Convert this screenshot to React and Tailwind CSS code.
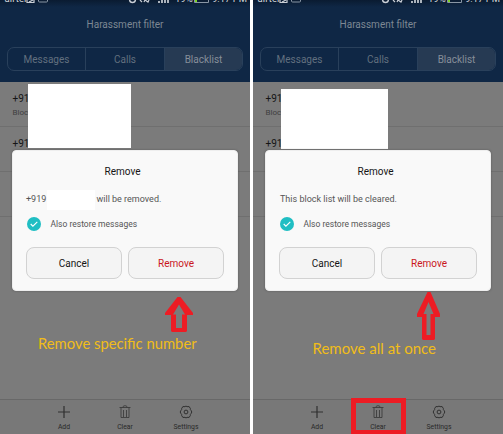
import React from "react";

function StatusBar() {
  return (
    <div className="relative h-[7px] shrink-0 bg-gradient-to-b from-[#0a1b31] to-[#0f2745] font-['Roboto',sans-serif] text-[9.5px] leading-[11px] text-[#d4d8dd]">
      <span className="absolute left-[4.5px] top-[-7px] tracking-[0.1px]">airtel</span>
      <svg className="absolute left-0 top-0" width="250" height="7" fill="none" stroke="#c9ced5">
        <path d="M27 0V2.5H34V0M29 2l4-2" strokeWidth="1.2" />
        <path d="M38.5 0v1q0 1 1 1h7q1 0 1-1V0" stroke="#8996a5" />
        <path d="M129.5 -1q0 3.5 3 3.5t3-3.5" strokeWidth="1.4" />
        <path d="M140 0l2 2M144 2l1-2 3 2 1-2" strokeWidth="1.2" />
        <path d="M159 1v2M162 0v3M165 0v3M168 0v3" strokeWidth="1.7" />
        <path d="M194.5 0v2.5h14V0" stroke="#8996a5" />
        <path d="M196 0v2" stroke="#7bd321" strokeWidth="2" />
      </svg>
      <span className="absolute left-[175px] top-[-7px]">19%</span>
      <span className="absolute left-[212px] top-[-7px] whitespace-nowrap">9:17 PM</span>
    </div>
  );
}

function Header() {
  return (
    <header className="flex h-[82px] shrink-0 flex-col bg-[#0f2745]">
      <StatusBar />
      <h1 className="mt-[9px] text-center text-[10px] leading-[17px] text-[#7d8793]">Harassment filter</h1>
      <div className="mx-[7px] mt-[14px] flex h-[24px] overflow-hidden rounded-[7px] border border-[#29405b] text-[10px] leading-[24px] text-[#62707f]">
        <span className="w-[78px] border-r border-[#29405b] text-center">Messages</span>
        <span className="w-[79px] border-r border-[#29405b] text-center">Calls</span>
        <span className="flex-1 bg-[#263a53] text-center text-[#868f9a]">Blacklist</span>
      </div>
    </header>
  );
}

function Contacts({ tall }) {
  return (
    <div className="relative shrink-0">
      <div className="h-[45px] border-b border-[#6f6f6f] pl-[12.5px] pt-[9px]">
        <div className="text-[10px] leading-[15px] text-[#151515]">+91</div>
        <div className="text-[8px] leading-[13px] text-[#3f3f3f]">Bloc</div>
      </div>
      <div className="h-[45px] border-b border-[#6f6f6f] pl-[12.5px] pt-[9px] text-[10px] leading-[15px] text-[#151515]">+91</div>
      <div className="h-[45px] border-b border-[#6f6f6f]" />
      <div className={tall ? "absolute left-[28px] top-[2px] h-[64px] w-[103px] bg-white" : "absolute left-[28px] top-[7px] h-[60px] w-[107px] bg-white"} />
    </div>
  );
}

function Dialog({ specific }) {
  return (
    <section className="absolute left-[12px] top-[150px] flex h-[141px] w-[226px] flex-col rounded-[4px] border border-[#eee] bg-[#f9f9f9] px-[13px] shadow-[0_0_2px_#555]">
      <h2 className="mt-[12px] pr-[5px] text-center text-[10px] leading-[17px] text-[#151515]">Remove</h2>
      <div className="mt-[10px] flex h-[20px] items-center whitespace-nowrap text-[9px] text-[#555]">
        {specific ? (
          <>
            <span className="w-[21px]">+919</span>
            <span className="h-[20px] w-[48px] bg-white" />
            <span className="ml-[1.5px]">will be removed.</span>
          </>
        ) : <span className="ml-[1px]">This block list will be cleared.</span>}
      </div>
      <div className="mt-[7px] flex h-[14px] items-center">
        <svg className="ml-[1px]" width="14" height="14" viewBox="0 0 14 14" fill="none">
          <circle cx="7" cy="7" r="7" fill="#20bec3" />
          <path d="m3.7 7 2.2 2.2 4.4-4.4" stroke="white" strokeWidth="1.1" />
        </svg>
        <span className="ml-[9.5px] text-[8.5px] leading-[14px] text-[#555]">Also restore messages</span>
      </div>
      <div className="mt-[16px] flex gap-[6px] text-[10px]">
        <button className="h-[32px] w-[96px] rounded-[8px] border border-[#d2d2d2] bg-[#f4f4f4] text-[#151515]">Cancel</button>
        <button className="h-[32px] w-[96px] rounded-[8px] border border-[#d2d2d2] bg-[#f4f4f4] text-[#c9161d]">Remove</button>
      </div>
    </section>
  );
}

function Footer() {
  return (
    <footer className="flex h-[35px] shrink-0 justify-center border-t border-[#686868] bg-[#787878] text-[6.8px] text-[#292929]">
      <div className="flex w-[61px] flex-col items-center pt-[5px]">
        <svg width="14" height="14" viewBox="0 0 14 14" stroke="#303030" strokeWidth="1.2"><path d="M1 7h12M7 1v12" /></svg>
        <span className="mt-[4px] leading-[9px]">Add</span>
      </div>
      <div className="flex w-[61px] flex-col items-center pt-[5px]">
        <svg width="14" height="14" viewBox="0 0 14 14" fill="none" stroke="#363636" strokeWidth=".8"><path d="M1.5 2.5h11M3 2.5v10h8v-10M5 2.5V1.6l1-.8h2l1 .8v.9M5.5 5v7M8.5 5v7" /></svg>
        <span className="mt-[4px] leading-[9px]">Clear</span>
      </div>
      <div className="flex w-[61px] flex-col items-center pt-[5px]">
        <svg width="14" height="14" viewBox="0 0 14 14" fill="none" stroke="#303030" strokeWidth="1"><path d="M4 1.4q1 .8 2 .1.9-.6 2 0 1 .7 2-.1l1.4 2.2q-.4 1.1.6 1.7 1.6 1.7 0 3.4-1 .6-.6 1.7L10 12.6q-1-.8-2-.1-.9.6-2 0-1-.7-2 .1l-1.4-2.2Q3 9.3 2 8.7q-1.6-1.7 0-3.4 1-.6.6-1.7Z" /><circle cx="7" cy="7" r="1.9" /></svg>
        <span className="mt-[4px] leading-[9px]">Settings</span>
      </div>
    </footer>
  );
}

function Phone({ specific = false }) {
  return (
    <main className="relative flex h-[434px] w-[250px] flex-col overflow-hidden bg-[#7b7b7b] font-['Roboto',sans-serif]">
      <Header />
      <Contacts tall={specific} />
      <div className="flex-1" />
      <Footer />
      <Dialog specific={specific} />
      {specific ? (
        <>
          <svg className="absolute left-[164px] top-[296px]" width="30" height="40" fill="#ed1c24" fillRule="evenodd"><path d="M13.5 1h3L29 17v2h-6v16l-1 1H8l-1-1V19H1v-2ZM15 8.5 9 18.5h3V32h6V18.5h3Z" /></svg>
          <div className="absolute left-[38px] top-[333px] whitespace-nowrap font-['Lato',sans-serif] text-[14.8px] leading-[20px] text-[#f1bd19]">Remove specific number</div>
        </>
      ) : (
        <>
          <svg className="absolute left-[163px] top-[290px]" width="26" height="52" fill="#ed1c24" fillRule="evenodd"><path d="M11.5 2h3L24 24v3h-5v22l-1 1H7l-1-1V27H1v-3ZM12.5 12 7.5 24H10.5V45h4V24h3Z" /></svg>
          <div className="absolute left-[59.5px] top-[338px] whitespace-nowrap font-['Lato',sans-serif] text-[15px] leading-[20px] text-[#f1bd19]">Remove all at once</div>
          <div className="absolute left-[98px] top-[398px] h-[36px] w-[55px] border-[5px] border-b-[4px] border-[#ed1c24]" />
        </>
      )}
    </main>
  );
}

export default function App() {
  return <div className="flex h-[434px] w-[503px] gap-[3px] overflow-hidden bg-white"><Phone specific /><Phone /></div>;
}
